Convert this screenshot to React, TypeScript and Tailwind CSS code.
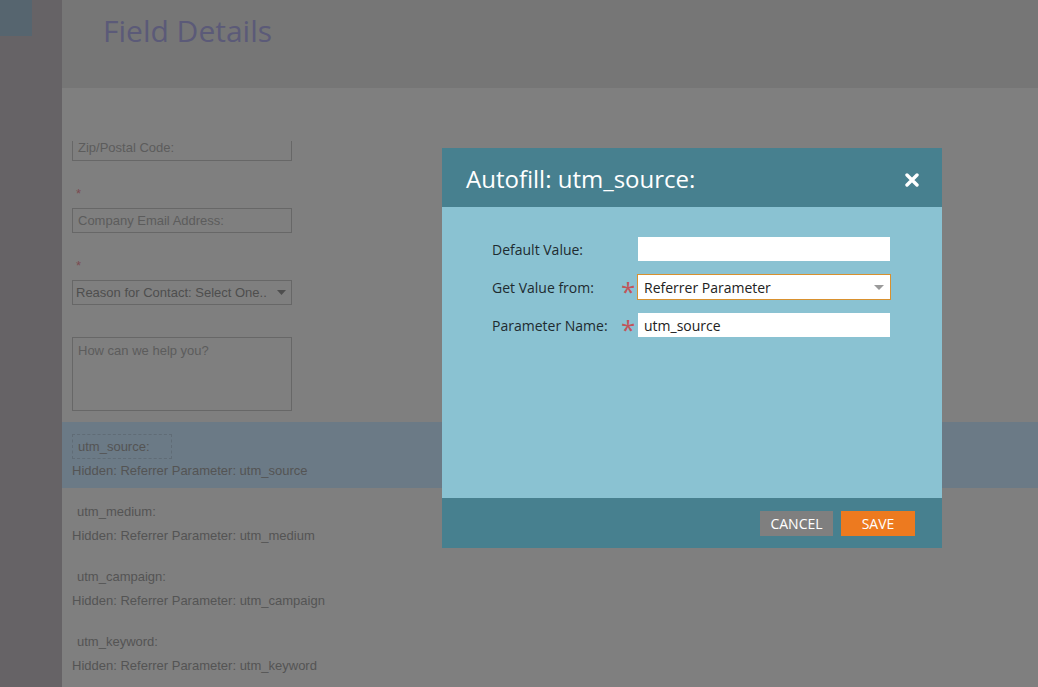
import { ReactNode } from "react";

const arial = "font-['Liberation_Sans',Arial,sans-serif]";
const open = "font-['Open_Sans',sans-serif]";

const hiddenFields = ["utm_medium", "utm_campaign", "utm_keyword"];

function Star() {
  return <span className={`${open} text-[26px] leading-none text-[#c2545a] translate-y-[4px]`}>*</span>;
}

function Row({ label, required, children }: { label: string; required?: boolean; children: ReactNode }) {
  return (
    <div className="flex items-center h-[26px]">
      <div className="w-[128px] text-[14px] text-[#1e2b30]">{label}</div>
      <div className="w-[18px] flex justify-start pl-[1px]">{required && <Star />}</div>
      {children}
    </div>
  );
}

export default function App() {
  return (
    <div className={`relative w-[1038px] h-[687px] overflow-hidden flex ${arial}`}>
      {/* sidebar */}
      <aside className="w-[62px] shrink-0 bg-[#666366]">
        <div className="w-[32px] h-[36px] bg-[#56656f]" />
      </aside>

      <main className="flex-1 flex flex-col bg-[#7f7f7f]">
        <header className="h-[88px] shrink-0 bg-[#767676] pl-[41px] pt-[11px]">
          <h1 className={`${open} text-[30px] leading-[40px] text-[#5b5a78]`}>Field Details</h1>
        </header>

        <div className="text-[13px] text-[#545454]">
          <div className="pl-[10px] pt-[53px]">
            <div className="w-[220px] h-[20px] border-x border-b border-[#676767] overflow-hidden">
              <div className="pl-[5px] -mt-[2px] leading-[18px] text-[#5c5c5c]">Zip/Postal Code:</div>
            </div>

            <div className="mt-[22px] h-[18px] pl-[4px] text-[#7b4b52] leading-[22px]">*</div>
            <div className="mt-[7px] w-[220px] h-[25px] border border-[#676767] flex items-center pl-[5px] text-[#5c5c5c]">
              Company Email Address:
            </div>

            <div className="mt-[22px] h-[18px] pl-[4px] text-[#7b4b52] leading-[22px]">*</div>
            <div className="mt-[7px] w-[220px] h-[25px] border border-[#676767] flex items-center justify-between pl-[3px] pr-[5px] text-[#4e4e4e]">
              <span>Reason for Contact: Select One..</span>
              <svg width="9" height="5" viewBox="0 0 9 5"><path d="M0 0h9L4.5 5z" fill="#4e4e4e" /></svg>
            </div>

            <div className="mt-[32px] w-[220px] h-[74px] border border-[#676767] pl-[5px] pt-[3px] text-[#5c5c5c]">
              How can we help you?
            </div>
          </div>

          <div className="mt-[11px] h-[66px] bg-[#6b7a86] pl-[10px] pt-[12px]">
            <div className="w-[100px] h-[25px] border border-dashed border-[#606c76] flex items-center pl-[5px]">utm_source:</div>
            <div className="mt-[3px] leading-[18px]">Hidden: Referrer Parameter: utm_source</div>
          </div>

          {hiddenFields.map((f) => (
            <div key={f} className="h-[65px] pl-[10px] pt-[15px]">
              <div className="leading-[18px] pl-[5px]">{f}:</div>
              <div className="mt-[6px] leading-[18px]">Hidden: Referrer Parameter: {f}</div>
            </div>
          ))}
        </div>
      </main>

      {/* dialog */}
      <div className={`absolute left-[442px] top-[148px] w-[500px] h-[400px] flex flex-col ${open}`}>
        <div className="h-[59px] bg-[#47808f] flex items-center justify-between pl-[24px] pr-[24px]">
          <h2 className="text-[24px] text-white leading-none mt-[3px]">Autofill: utm_source:</h2>
          <svg width="14" height="14" viewBox="0 0 14 14" className="mt-[4px] -mr-[1px]">
            <path d="M2 2l10 10M12 2L2 12" stroke="#fff" strokeWidth="3.4" strokeLinecap="round" />
          </svg>
        </div>

        <div className="flex-1 bg-[#8ac2d2] pl-[50px] pt-[29px] flex flex-col gap-[12px]">
          <Row label="Default Value:">
            <div className="w-[252px] h-[24px] bg-white" />
          </Row>
          <Row label="Get Value from:" required>
            <div className="-ml-[1px] w-[254px] h-[26px] bg-white border border-[#d9912f] flex items-center justify-between pl-[6px] pr-[6px] text-[14px] text-[#222]">
              <span>Referrer Parameter</span>
              <svg width="10" height="5" viewBox="0 0 10 5"><path d="M0 0h10L5 5z" fill="#9a9a9a" /></svg>
            </div>
          </Row>
          <Row label="Parameter Name:" required>
            <div className="w-[252px] h-[24px] bg-white flex items-center pl-[6px] text-[14px] text-[#222]">utm_source</div>
          </Row>
        </div>

        <div className="h-[50px] bg-[#47808f] flex items-center justify-end gap-[8px] pr-[27px]">
          <button className="w-[73px] h-[25px] bg-[#7f7f7f] text-white text-[14px]">CANCEL</button>
          <button className="w-[74px] h-[25px] bg-[#ed7a1f] text-white text-[14px]">SAVE</button>
        </div>
      </div>
    </div>
  );
}
